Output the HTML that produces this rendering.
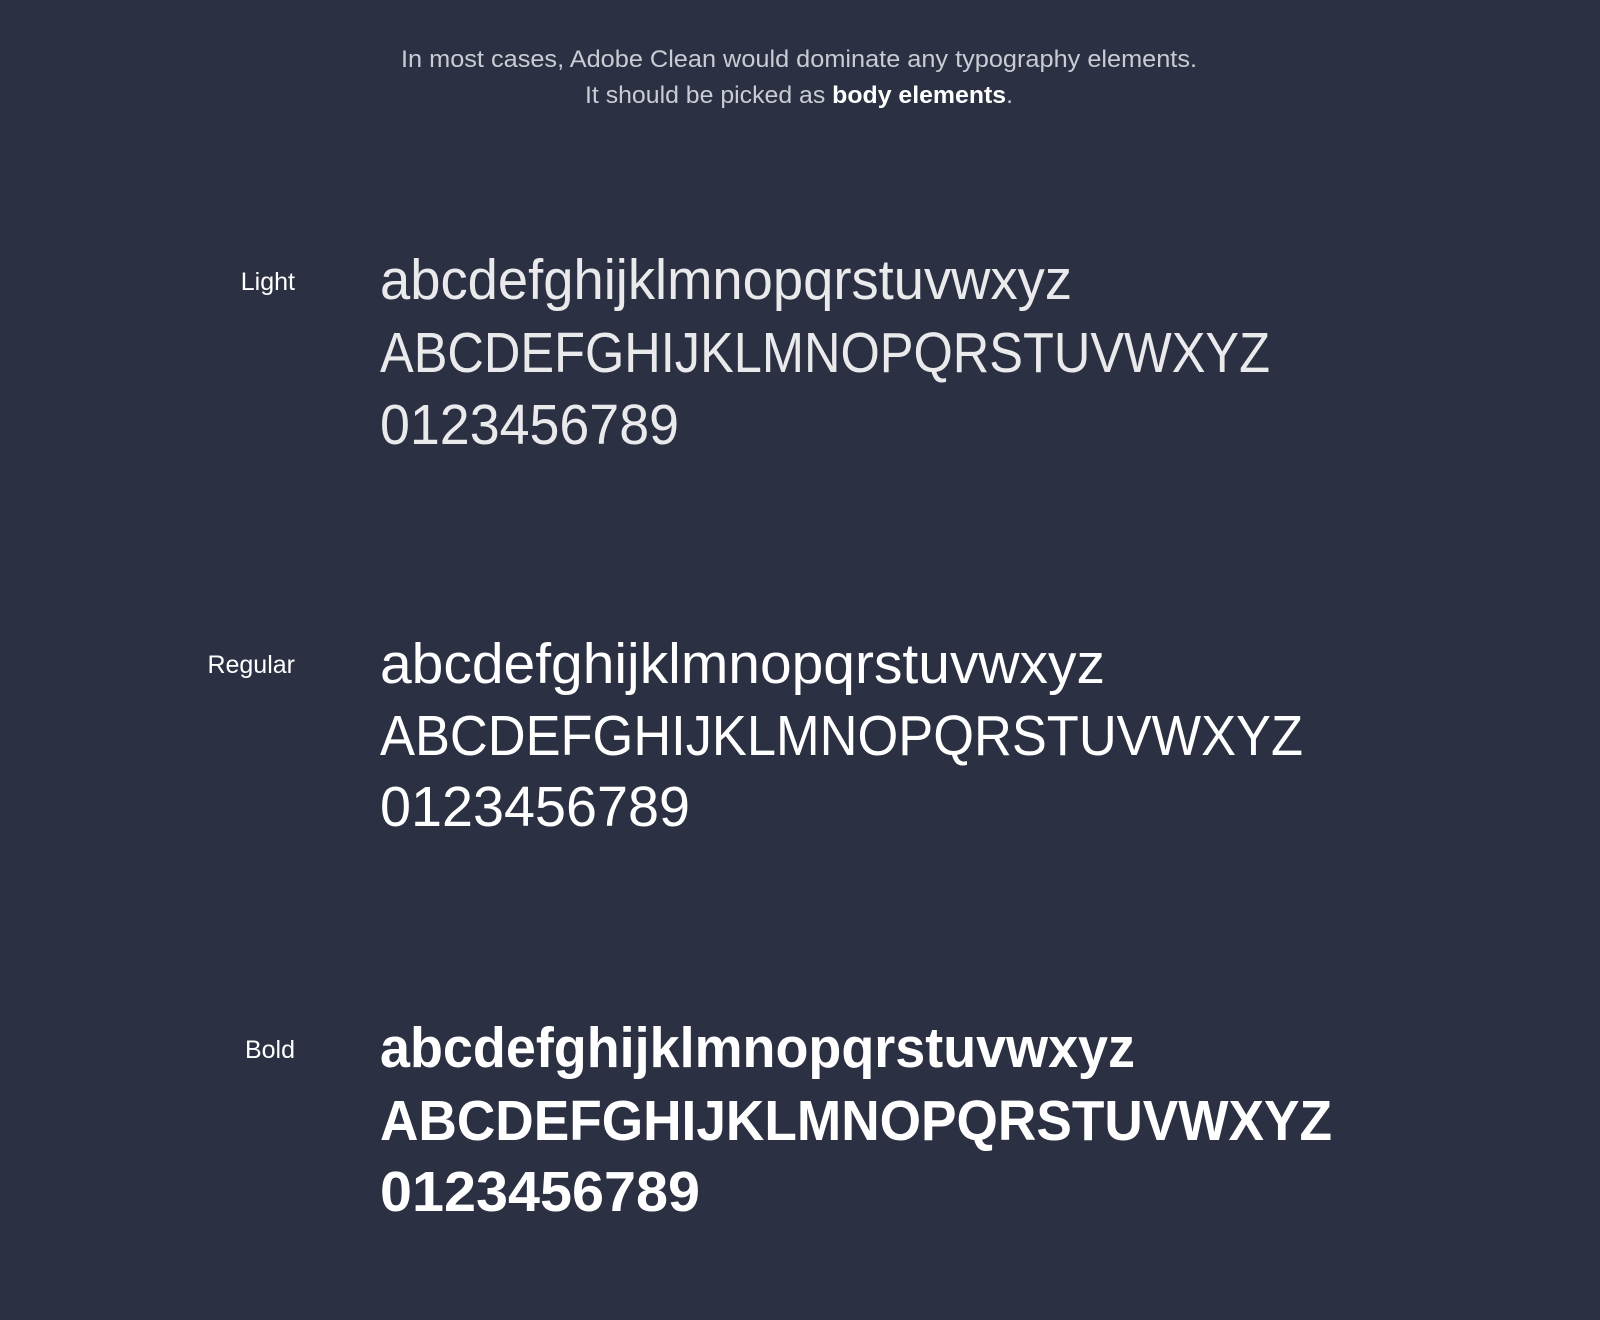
<!DOCTYPE html>
<html><head><meta charset="utf-8"><style>
html,body{margin:0;padding:0;background:#2b3042;}
svg{display:block}
text{font-family:"Liberation Sans",sans-serif;fill:#fff}
</style></head><body>
<svg width="1600" height="1320" viewBox="0 0 1600 1320">
<rect width="1600" height="1320" fill="#2b3042"/>
<text x="401" y="67" font-size="24" style="fill:#c9ccd4" textLength="796" lengthAdjust="spacingAndGlyphs">In most cases, Adobe Clean would dominate any typography elements.</text>
<text x="585" y="103" font-size="24" style="fill:#c9ccd4" textLength="428" lengthAdjust="spacingAndGlyphs">It should be picked as <tspan font-weight="bold" style="fill:#fff">body elements</tspan>.</text>

<text x="295" y="290" font-size="25" text-anchor="end">Light</text>
<text x="295" y="673" font-size="25" text-anchor="end">Regular</text>
<text x="295" y="1058" font-size="25" text-anchor="end">Bold</text>

<g font-size="57" opacity="0.9">
<text x="380" y="299" textLength="692" lengthAdjust="spacingAndGlyphs">abcdefghijklmnopqrstuvwxyz</text>
<text x="380" y="372" textLength="890" lengthAdjust="spacingAndGlyphs">ABCDEFGHIJKLMNOPQRSTUVWXYZ</text>
<text x="380" y="444" textLength="299" lengthAdjust="spacingAndGlyphs">0123456789</text>
</g>
<g font-size="57">
<text x="380" y="683" textLength="725" lengthAdjust="spacingAndGlyphs">abcdefghijklmnopqrstuvwxyz</text>
<text x="380" y="755" textLength="923" lengthAdjust="spacingAndGlyphs">ABCDEFGHIJKLMNOPQRSTUVWXYZ</text>
<text x="380" y="826" textLength="310" lengthAdjust="spacingAndGlyphs">0123456789</text>
</g>
<g font-size="57" font-weight="bold">
<text x="380" y="1067" textLength="755" lengthAdjust="spacingAndGlyphs">abcdefghijklmnopqrstuvwxyz</text>
<text x="380" y="1140" textLength="952" lengthAdjust="spacingAndGlyphs">ABCDEFGHIJKLMNOPQRSTUVWXYZ</text>
<text x="380" y="1211" textLength="320" lengthAdjust="spacingAndGlyphs">0123456789</text>
</g>
</svg>
</body></html>
